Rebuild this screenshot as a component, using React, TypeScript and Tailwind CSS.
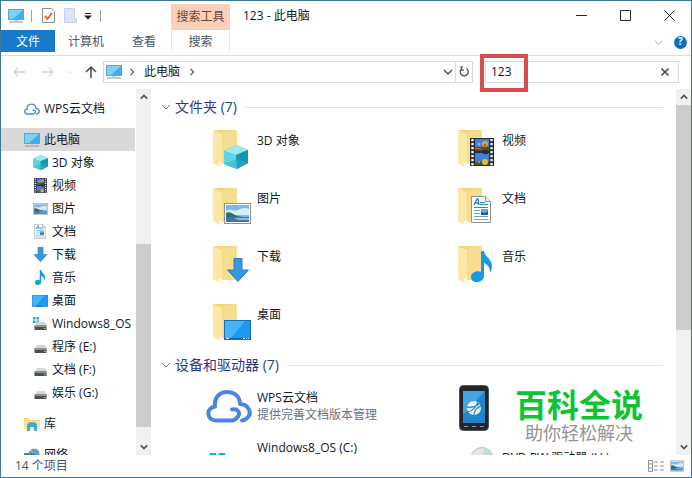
import { useState } from "react";
import type { ReactNode } from "react";

const MonitorIcon = ({ className }: { className: string }) => (
  <svg viewBox="0 0 16 14" className={className}>
    <rect x="0.5" y="0.5" width="15" height="10" fill="#41aeea" stroke="#5aa5d0" />
    <path d="M1 1h14L5 10H1z" fill="#7fd0f7" />
    <path d="M1 13h14" stroke="#8fa6b3" strokeWidth="1.2" />
    <path d="M6 11h4v1H6z" fill="#c9d5db" />
  </svg>
);

const CloudIcon = ({ className }: { className: string }) => (
  <svg
    viewBox="0 0 46 34"
    className={className}
    fill="none"
    stroke="#4a86e0"
    strokeWidth="4"
    strokeLinecap="round"
    strokeLinejoin="round"
  >
    <path d="M26 20.500c5-1.500 9 3 6 7-1.500 2-3.500 4-6 4H10c-9 0-11-12-1-14C8 9 13 3 21 3c8 0 13 5 13 12 8 0 13 9 7 14-1.500 1.500-3 2.500-5 2.500" />
  </svg>
);

const CubeIcon = ({ className }: { className: string }) => (
  <svg viewBox="0 0 24 24" className={className}>
    <path d="M12 0 24 5v13l-11 6L0 19V6z" fill="#35b5cc" />
    <path d="M12 0 24 5 12 10 0 6z" fill="#9ce9ef" />
    <path d="m0 6 12 4 1 14-13-5z" fill="#62d3e2" />
    <path d="m12 10 12-5v13l-11 6z" fill="#1696b4" />
    <path d="m0 19 12-5 12 4-11 6z" fill="#2bb4ca" opacity="0.5" />
  </svg>
);

const FilmIcon = ({ className }: { className: string }) => (
  <svg viewBox="0 0 24 28" className={className}>
    <path d="M0 0h24v28H0z" fill="#2a2a2c" />
    <path d="M5 1h14v12H5zM5 15h14v12H5z" fill="#3f7fe0" />
    <path d="M5 9h7l3-2 4 2v4H5zM5 24h5l3-2 6 2v3H5z" fill="#3c5a3a" />
    <path d="M5 10h6v1H5z" fill="#d8543c" />
    <circle cx="15" cy="6" r="3" fill="#e9a92c" />
    <circle cx="15" cy="7" r="1.5" fill="#d34a33" />
    <circle cx="9" cy="6" r="1.5" fill="#8bb0ec" />
    <circle cx="15" cy="24" r="3" fill="#e4bd35" />
    <circle cx="9" cy="24" r="1.2" fill="#e0793c" />
    <path d="M13 12h5v4h-5z" fill="#282830" />
    <path d="M2.500 1v27M21.500 1v27" stroke="#f2f2f2" strokeWidth="2.4" strokeDasharray="2.2 1.8" />
  </svg>
);

const PictureIcon = ({ className }: { className: string }) => (
  <svg viewBox="0 0 27 21" className={className}>
    <rect x="0.5" y="0.5" width="26" height="20" fill="#fff" stroke="#8d9298" />
    <path d="M2 2h23v17H2z" fill="#7cb8ea" />
    <path d="M2 8c5-3 8 1 12-1s7-3 11-1v6H2z" fill="#d7ecf8" />
    <path d="M2 10c3-2 6 0 9 2s7 1 9 3H2z" fill="#356c63" />
    <path d="M2 14h23v5H2z" fill="#3d76ae" />
    <path d="M10 15h15v2H14z" fill="#8fbbe0" />
  </svg>
);

const DocumentIcon = ({ className }: { className: string }) => (
  <svg viewBox="0 0 20 27" className={className}>
    <path d="M0.500 0.500h14l5 5v21H0.500z" fill="#fff" stroke="#8b949b" />
    <path d="M14.500 0.500v5h5" fill="#e4e9ec" stroke="#8b949b" />
    <path d="m3 9 3-6h1l1 6M4.500 7H7" fill="none" stroke="#2a82c9" strokeWidth="1.4" />
    <path d="M9 6.500h5M9 8.500h8M3 11.500h14" stroke="#2a8ad0" />
    <path d="M3 14.500h6M3 17.500h6M3 20.500h14M3 23.500h14" stroke="#6e9fc0" />
    <path d="M10 13h7v6h-7z" fill="#64a9dc" />
    <path d="m10 16 4 1 3-2v4h-7z" fill="#245d86" />
  </svg>
);

const DownloadIcon = ({ className }: { className: string }) => (
  <svg viewBox="0 0 22 24" className={className}>
    <path d="M7 0.500h8V12h6.500L11 23.500 0.500 12H7z" fill="#3797e2" stroke="#2b7fc6" />
  </svg>
);

const MusicIcon = ({ className }: { className: string }) => (
  <svg viewBox="0 0 21 31" className={className}>
    <path
      d="M10 0h3c0 5 8 8 8 15 0 3-1 5-2 7 0-6-2-8-6-10v13c0 4-4 6-7 6-4 0-6-2-6-5 0-4 5-7 10-5z"
      fill="#179be0"
    />
  </svg>
);

const DesktopIcon = ({ className }: { className: string }) => (
  <svg viewBox="0 0 27 20" className={className}>
    <rect x="0.5" y="0.5" width="26" height="19" fill="#1b9af5" stroke="#176fb3" />
    <path d="M1 1h20L7 18H1z" fill="#45b2fb" />
    <path d="M1 18.500h25" stroke="#1368ad" />
    <path d="M2 18.500h3M19 18.500h2M22 18.500h1M24 18.500h1" stroke="#d3ecff" />
  </svg>
);

const DriveIcon = ({ className, system }: { className: string; system?: boolean }) => (
  <svg viewBox="0 0 15 14" className={className}>
    {system && <path d="M0 0h2.500v2.500H0zM3.500 0H6v2.500H3.500zM0 3.500h2.500V6H0zM3.500 3.500H6V6H3.500z" fill="#1fa8e8" />}
    <path d="M4 5h8l2 4H2z" fill="#d3d6d7" />
    <path d="M1.500 8.500h12V13h-12z" fill="#4b4f50" />
    <path d="M1.500 8.500h12V10h-12z" fill="#8d9293" />
    <path d="M11 11h1.500v1H11z" fill="#8ddb8c" />
  </svg>
);

const LibraryIcon = ({ className }: { className: string }) => (
  <svg viewBox="0 0 16 14" className={className}>
    <path d="M0 1h5l1 2h10v9H0z" fill="#f6d876" />
    <path d="M0 4h16v8H0z" fill="#fbe49a" />
    <path d="M3 14V8c0-2 2-3 5-3s5 1 5 3v6h-3v-4H6v4z" fill="#45a8d4" />
  </svg>
);

const NetworkIcon = ({ className }: { className: string }) => (
  <svg viewBox="0 0 16 14" className={className}>
    <circle cx="10" cy="6" r="5.5" fill="#5f9fc0" />
    <path d="M6 2c3 2 4 5 4 9" stroke="#c4e2ef" fill="none" />
    <path d="M0 5h10v6H0z" fill="#3b87b3" />
  </svg>
);

const PhoneIcon = ({ className }: { className: string }) => (
  <svg viewBox="0 0 30 46" className={className}>
    <rect x="0.5" y="0.5" width="29" height="45" rx="4" fill="#20262c" stroke="#4d555c" />
    <path d="M4 6h22v32H4z" fill="#2384cc" />
    <path d="M4 6h22L4 30z" fill="#45a3e2" />
    <circle cx="15" cy="23" r="7" fill="#eef8fd" />
    <path
      d="M8 22c6 1 10-1 13-4M9 27c5-1 8-5 10-10M15 30c0-4 3-8 7-9"
      stroke="#2f8fd2"
      strokeWidth="1.3"
      fill="none"
    />
    <path d="M5 41.500h4M13 41.500h4M21 41.500h4" stroke="#8b959c" />
  </svg>
);

const DiscIcon = ({ className }: { className: string }) => (
  <svg viewBox="0 0 24 24" className={className}>
    <circle cx="12" cy="12" r="11.5" fill="#e3e8e7" stroke="#b8bfbd" />
    <path d="M12 12 14 1c4 0 7 3 9 7z" fill="#c4ded6" />
    <circle cx="12" cy="12" r="3" fill="#fff" />
  </svg>
);

const FolderIcon = ({ children }: { children: ReactNode }) => (
  <div className="relative h-10 w-10 shrink-0">
    <svg viewBox="0 0 40 40" className="h-10 w-10">
      <path d="M0 1h24v34H8z" fill="#f4d47a" />
      <path d="M10 3 24 1v34H8z" fill="#f7dd8e" />
      <path d="M0 1 9 5v28l-1 6-8-5z" fill="#fbe7a6" />
      <path d="M6 38v-4l3-1-1 6z" fill="#fffbe8" />
    </svg>
    {children}
  </div>
);

const Chevron = ({ className, direction }: { className?: string; direction: "up" | "down" | "right" }) => {
  const paths = { up: "M1 7l4-4 4 4", down: "M1 3l4 4 4-4", right: "M3 1l4 4-4 4" };
  return (
    <svg viewBox="0 0 10 10" className={className} fill="none" stroke="currentColor">
      <path d={paths[direction]} />
    </svg>
  );
};

const treeItems = [
  { label: "3D 对象", icon: <CubeIcon className="h-[15px] w-[15px]" /> },
  { label: "视频", icon: <FilmIcon className="h-[15px] w-[13px]" /> },
  { label: "图片", icon: <PictureIcon className="h-3 w-[15px]" /> },
  { label: "文档", icon: <DocumentIcon className="h-[15px] w-3" /> },
  { label: "下载", icon: <DownloadIcon className="h-[15px] w-[15px]" /> },
  { label: "音乐", icon: <MusicIcon className="h-[15px] w-3" /> },
  { label: "桌面", icon: <DesktopIcon className="h-3 w-4" /> },
  { label: "Windows8_OS", icon: <DriveIcon className="h-[14px] w-[15px]" system /> },
  { label: "程序 (E:)", icon: <DriveIcon className="h-[14px] w-[15px]" /> },
  { label: "文档 (F:)", icon: <DriveIcon className="h-[14px] w-[15px]" /> },
  { label: "娱乐 (G:)", icon: <DriveIcon className="h-[14px] w-[15px]" /> },
];

const folders = [
  { label: "3D 对象", icon: <CubeIcon className="absolute top-4 left-[11px] h-6 w-6" /> },
  { label: "视频", icon: <FilmIcon className="absolute top-[9px] left-3 h-7 w-6" /> },
  { label: "图片", icon: <PictureIcon className="absolute top-4 left-[11px] h-[21px] w-[27px]" /> },
  { label: "文档", icon: <DocumentIcon className="absolute top-[9px] left-[13px] h-[27px] w-5" /> },
  { label: "下载", icon: <DownloadIcon className="absolute top-[13px] left-[14px] h-6 w-[22px]" /> },
  { label: "音乐", icon: <MusicIcon className="absolute top-[6px] left-[13px] h-[31px] w-[21px]" /> },
  { label: "桌面", icon: <DesktopIcon className="absolute top-[17px] left-[11px] h-5 w-[27px]" /> },
];

const TreeItem = ({
  label,
  icon,
  level,
  selected,
}: {
  label: string;
  icon: ReactNode;
  level: 1 | 2;
  selected?: boolean;
}) => (
  <button
    className={`flex h-[23px] w-full shrink-0 items-center gap-1 text-left whitespace-nowrap ${
      level === 1 ? "pl-[23px]" : "pl-[31px]"
    } ${selected ? "bg-[#d9d9d9]" : ""}`}
  >
    <span className="flex w-4 shrink-0 justify-center">{icon}</span>
    {label}
  </button>
);

const Scrollbar = ({ children }: { children: ReactNode }) => (
  <div className="flex w-[15px] shrink-0 flex-col bg-[#f0f0f0] text-[#505050]">
    <button aria-label="向上滚动" className="flex h-4 shrink-0 items-center justify-center">
      <Chevron direction="up" className="h-2 w-2 stroke-2" />
    </button>
    <div className="flex flex-1 flex-col">{children}</div>
    <button aria-label="向下滚动" className="flex h-4 shrink-0 items-center justify-center">
      <Chevron direction="down" className="h-2 w-2 stroke-2" />
    </button>
  </div>
);

const GroupHeader = ({ children }: { children: ReactNode }) => (
  <h2 className="flex h-6 items-center gap-1 pr-[13px] text-sm text-[#2b3a86]">
    <Chevron direction="down" className="h-[10px] w-[10px] text-gray-500" />
    <span className="whitespace-nowrap">{children}</span>
    <span className="ml-1 h-px flex-1 bg-[#e2e2e2]" />
  </h2>
);

const TitleBar = () => (
  <header className="flex h-[29px] shrink-0 items-center">
    <div className="flex w-[170px] items-center pl-[7px]">
      <MonitorIcon className="h-[14px] w-4" />
      <span className="ml-[7px] h-3 w-px bg-gray-400" />
      <button aria-label="属性" className="ml-[10px]">
        <svg viewBox="0 0 13 15" className="h-[15px] w-[13px]">
          <path d="M0.500 0.500h9l3 3v11h-12z" fill="#fff" stroke="#8e8e92" />
          <path d="m3 8 2.500 3L10 5" fill="none" stroke="#e06a3c" strokeWidth="2" />
        </svg>
      </button>
      <button aria-label="新建文件夹" className="ml-[9px]">
        <svg viewBox="0 0 13 15" className="h-[15px] w-[13px]">
          <path d="M0.500 0.500h10v10h2v4h-12z" fill="#dbe4f7" stroke="#c5d0ea" />
        </svg>
      </button>
      <button aria-label="自定义快速访问工具栏" className="ml-[7px]">
        <svg viewBox="0 0 8 8" className="h-2 w-2">
          <path d="M1 1h6v1H1zM0 3.500h8l-4 4z" fill="#222" />
        </svg>
      </button>
      <span className="ml-2 h-3 w-px bg-gray-400" />
    </div>
    <div className="mt-[3px] flex h-[26px] w-[59px] items-center justify-center bg-[#fccfb8] text-[#70473a]">
      搜索工具
    </div>
    <h1 className="ml-[13px] flex-1">123 - 此电脑</h1>
    <div className="flex text-gray-800">
      <button aria-label="最小化" className="flex w-11 justify-center">
        <svg viewBox="0 0 11 11" className="h-[11px] w-[11px]" stroke="currentColor">
          <path d="M0 5.500h11" />
        </svg>
      </button>
      <button aria-label="最大化" className="flex w-11 justify-center">
        <svg viewBox="0 0 11 11" className="h-[11px] w-[11px]" stroke="currentColor" fill="none">
          <path d="M0.500 0.500h10v10h-10z" />
        </svg>
      </button>
      <button aria-label="关闭" className="flex w-11 justify-center">
        <svg viewBox="0 0 11 11" className="h-[11px] w-[11px]" stroke="currentColor">
          <path d="m0.500 0.500 10 10m0-10-10 10" />
        </svg>
      </button>
    </div>
  </header>
);

const RibbonTabs = () => (
  <nav className="flex h-[26px] shrink-0 items-start border-b border-[#dcdcdc] text-gray-600">
    <button className="h-[22px] w-[54px] bg-[#1979ca] pt-[2px] text-white">文件</button>
    <button className="h-[22px] w-[62px] pt-[2px]">计算机</button>
    <button className="h-[22px] w-[54px] pt-[2px]">查看</button>
    <button className="h-[22px] w-[59px] border-x border-[#f1e4dd] pt-[2px]">搜索</button>
    <div className="flex h-6 flex-1 items-center justify-end gap-[11px] pr-1">
      <button aria-label="展开功能区">
        <Chevron direction="down" className="h-[9px] w-[9px] text-gray-400" />
      </button>
      <button
        aria-label="帮助"
        className="flex h-[13px] w-[13px] items-center justify-center rounded-full bg-[#0f6fbd] text-[10px] font-bold text-white"
      >
        ?
      </button>
    </div>
  </nav>
);

const AddressBar = () => {
  const [query, setQuery] = useState("123");

  return (
    <div className="flex h-[33px] shrink-0 items-center pr-3 pb-[2px]">
      <div className="flex w-[102px] items-center pl-3 text-gray-300">
        <button aria-label="后退">
          <svg viewBox="0 0 12 10" className="h-[10px] w-3" fill="none" stroke="currentColor" strokeWidth="1.3">
            <path d="M12 5H1m4-4L1 5l4 4" />
          </svg>
        </button>
        <button aria-label="前进" className="ml-[17px]">
          <svg viewBox="0 0 12 10" className="h-[10px] w-3" fill="none" stroke="currentColor" strokeWidth="1.3">
            <path d="M0 5h11M7 1l4 4-4 4" />
          </svg>
        </button>
        <button aria-label="最近浏览的位置" className="ml-[13px]">
          <Chevron direction="down" className="h-[6px] w-[6px]" />
        </button>
        <button aria-label="向上" className="ml-3 text-gray-600">
          <svg viewBox="0 0 12 12" className="h-3 w-3" fill="none" stroke="currentColor" strokeWidth="1.6">
            <path d="M6 12V1M1 6l5-5 5 5" />
          </svg>
        </button>
      </div>
      <div className="flex h-[22px] flex-1 items-center border border-[#dadada] pl-[2px]">
        <MonitorIcon className="h-[14px] w-4" />
        <Chevron direction="right" className="ml-[6px] h-2 w-2 stroke-[1.5] text-gray-600" />
        <button className="ml-2">此电脑</button>
        <Chevron direction="right" className="ml-2 h-2 w-2 stroke-[1.5] text-gray-600" />
        <button aria-label="以前的位置" className="mr-[2px] ml-auto">
          <Chevron direction="down" className="h-[10px] w-[10px] stroke-[1.5] text-gray-600" />
        </button>
      </div>
      <button
        aria-label="刷新"
        className="flex h-[22px] w-[17px] items-center justify-center border-y border-r border-[#dadada] text-gray-600"
      >
        <svg viewBox="0 0 10 11" className="h-[11px] w-[10px]" fill="none" stroke="currentColor" strokeWidth="1.3">
          <path d="M3 2.500a4 4 0 1 0 4.500 0M4 0.800H2.200v3.400H5" />
        </svg>
      </button>
      <div className="relative ml-3 flex h-[22px] w-[194px] items-center border border-[#dadada] pr-[9px] pl-[5px]">
        <input
          aria-label="搜索"
          className="w-full min-w-0 flex-1 bg-transparent outline-none"
          value={query}
          onChange={(e) => setQuery(e.target.value)}
        />
        <button aria-label="清除搜索" onClick={() => setQuery("")}>
          <svg viewBox="0 0 8 8" className="h-2 w-2 text-gray-600" stroke="currentColor" strokeWidth="1.6">
            <path d="m0.500 0.500 7 7m0-7-7 7" />
          </svg>
        </button>
        <span className="pointer-events-none absolute -top-2 -left-[6px] h-[38px] w-12 border-4 border-[#d84c50]" />
      </div>
    </div>
  );
};

const Sidebar = () => (
  <aside className="flex w-[150px] shrink-0 overflow-hidden">
    <div className="flex min-w-0 flex-1 flex-col gap-2 overflow-hidden pt-2">
      <TreeItem level={1} label="WPS云文档" icon={<CloudIcon className="h-3 w-4" />} />
      <div className="shrink-0">
        <TreeItem level={1} label="此电脑" icon={<MonitorIcon className="h-[14px] w-4" />} selected />
        {treeItems.map((item) => (
          <TreeItem key={item.label} level={2} label={item.label} icon={item.icon} />
        ))}
      </div>
      <TreeItem level={1} label="库" icon={<LibraryIcon className="h-[14px] w-4" />} />
      <TreeItem level={1} label="网络" icon={<NetworkIcon className="h-[14px] w-4" />} />
    </div>
    <div className="ml-px flex">
      <Scrollbar>
        <div className="flex-[139]" />
        <div className="flex-[182] bg-[#cdcdcd]" />
        <div className="flex-[12]" />
      </Scrollbar>
    </div>
  </aside>
);

const Watermark = () => (
  <div className="pointer-events-none absolute right-12 bottom-[10px] text-center whitespace-nowrap">
    <div className="text-[32px] leading-8 font-bold text-[#0fc335]">百科全说</div>
    <div className="text-lg leading-6 text-[#949494]">助你轻松解决</div>
  </div>
);

const FileList = () => (
  <main className="relative flex min-w-0 flex-1 overflow-hidden">
    <div className="min-w-0 flex-1 overflow-hidden pt-[6px] pl-[10px]">
      <section>
        <GroupHeader>文件夹 (7)</GroupHeader>
        <ul className="grid auto-rows-[58px] grid-cols-[245px_1fr] pt-[10px] pl-[52px]">
          {folders.map((folder) => (
            <li key={folder.label} className="flex gap-1">
              <FolderIcon>{folder.icon}</FolderIcon>
              <span className="pt-1">{folder.label}</span>
            </li>
          ))}
        </ul>
      </section>
      <section className="-mt-2">
        <GroupHeader>设备和驱动器 (7)</GroupHeader>
        <ul className="grid auto-rows-[50px] grid-cols-[245px_1fr] pt-3 pl-[45px] whitespace-nowrap">
          <li className="flex gap-[5px]">
            <CloudIcon className="h-[34px] w-[46px]" />
            <div className="leading-[17px]">
              <div>WPS云文档</div>
              <div className="text-gray-500">提供完善文档版本管理</div>
            </div>
          </li>
          <li>
            <div className="-mt-1 flex w-[46px] justify-center">
              <PhoneIcon className="h-[46px] w-[30px]" />
            </div>
          </li>
          <li className="flex gap-[5px]">
            <div className="flex w-[46px] justify-center pt-[14px]">
              <DriveIcon className="h-9 w-10" system />
            </div>
            <span className="leading-[17px]">Windows8_OS (C:)</span>
          </li>
          <li className="flex gap-[5px]">
            <div className="flex w-[46px] justify-center pt-2 pl-4">
              <DiscIcon className="h-6 w-6 shrink-0" />
            </div>
            <span className="pt-[10px] leading-[17px]">DVD RW 驱动器 (H:)</span>
          </li>
        </ul>
      </section>
    </div>
    <Scrollbar>
      <div className="flex-[224] bg-[#cdcdcd]" />
      <div className="flex-[109]" />
    </Scrollbar>
    <Watermark />
  </main>
);

const StatusBar = () => (
  <footer className="flex h-[22px] shrink-0 items-center pr-[7px] pl-[14px] text-[#44546e]">
    <span className="flex-1">14 个项目</span>
    <button aria-label="详细信息" className="mr-[6px]">
      <svg viewBox="0 0 16 12" className="h-3 w-4" fill="none" stroke="#8a9298">
        <path d="M0.500 0.500h4v11h-4zM0.500 4h4M0.500 8h4M6 2h4M12 2h4M6 6h4M12 6h4M6 10h4M12 10h4" />
      </svg>
    </button>
    <button aria-label="大图标">
      <PictureIcon className="h-3 w-[14px]" />
    </button>
  </footer>
);

const App = () => {
  return (
    <div className="flex h-screen flex-col overflow-hidden border border-[#3d7896] bg-white font-['Open_Sans','Noto_Sans_CJK_SC',sans-serif] text-xs text-gray-900">
      <TitleBar />
      <RibbonTabs />
      <AddressBar />
      <div className="flex min-h-0 flex-1">
        <Sidebar />
        <FileList />
      </div>
      <StatusBar />
    </div>
  );
};

export default App;
